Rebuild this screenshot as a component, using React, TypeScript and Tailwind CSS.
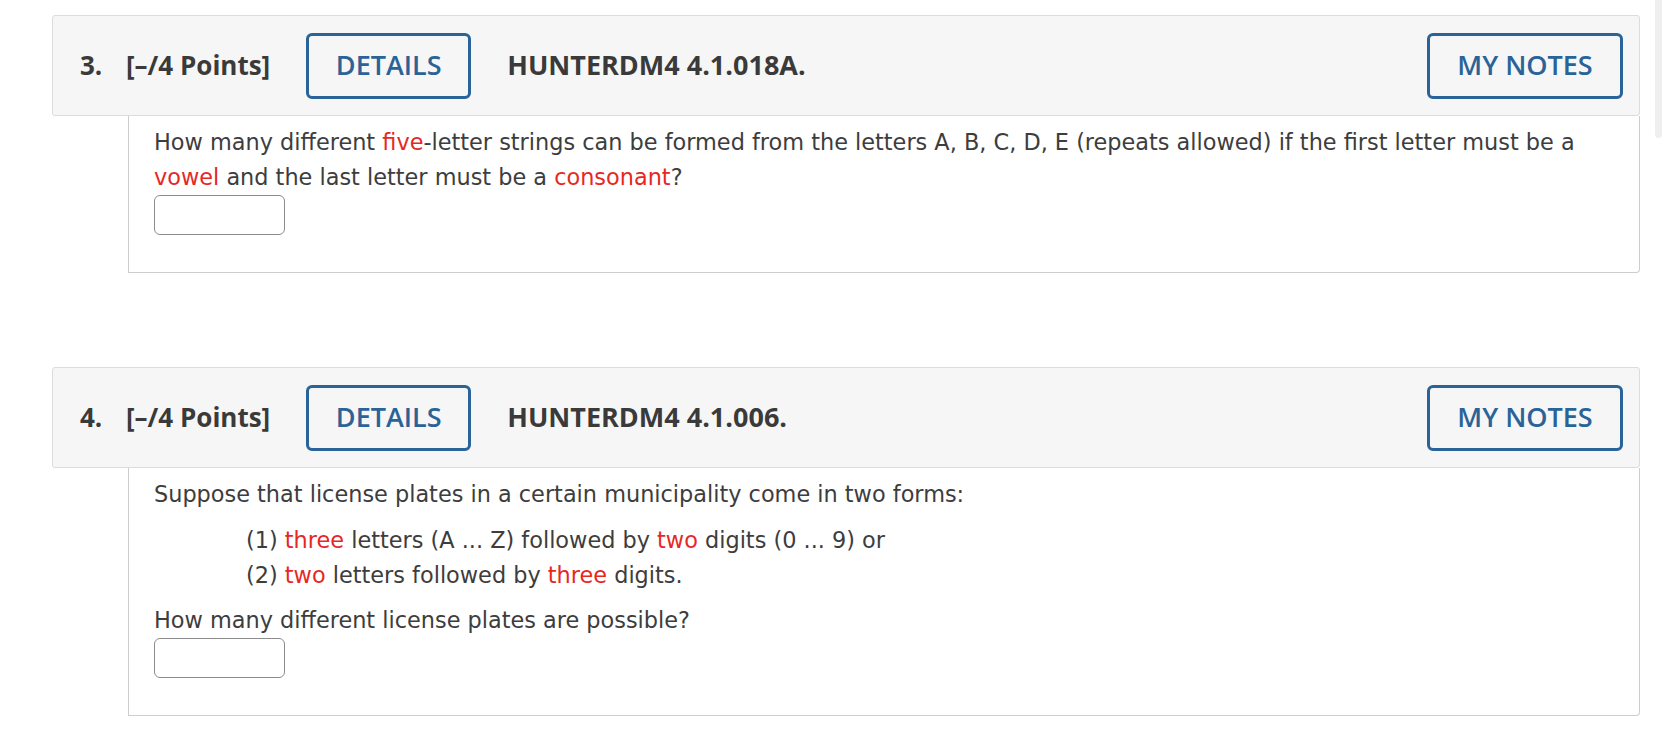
const RED = "text-[#e6281f]";

function Red({ children }: { children: React.ReactNode }) {
  return <span className={RED}>{children}</span>;
}

function AnswerBox() {
  return (
    <input
      type="text"
      className="block h-[40px] w-[131px] rounded-[6px] border-[1.5px] border-[#8c8c8c] bg-white"
    />
  );
}

function QuestionHeader({ num, code }: { num: string; code: string }) {
  return (
    <div className="flex h-[101px] items-center rounded-[3px] border border-[#dcdcdc] bg-[#f6f6f6] pl-[27px] pr-[16px] font-['Open_Sans',sans-serif] text-[26px] font-bold text-[#3a3a3a]">
      <span className="w-[46px]">{num}</span>
      <span>[–/4 Points]</span>
      <button className="ml-[36px] h-[66px] w-[165px] rounded-[6px] border-[3px] border-[#2a6398] text-[27px] font-semibold text-[#2a6398]">
        DETAILS
      </button>
      <span className="ml-[36px] text-[27px]">{code}</span>
      <button className="ml-auto h-[66px] w-[196px] rounded-[6px] border-[3px] border-[#2a6398] text-[27px] font-semibold text-[#2a6398]">
        MY NOTES
      </button>
    </div>
  );
}

function QuestionBody({ children }: { children: React.ReactNode }) {
  return (
    <div className="ml-[76px] rounded-br-[4px] border-x border-b border-[#cdcdcd] bg-white pb-[37px] pl-[25px] pr-[20px] pt-[9px] font-['DejaVu_Sans',Verdana,sans-serif] text-[22.4px] leading-[35px] text-[#3d3d3d]">
      {children}
    </div>
  );
}

export default function App() {
  return (
    <div className="relative min-h-screen bg-white pl-[52px] pr-[28px] pt-[15px]">
      <div className="absolute right-[6px] top-0 h-[138px] w-[7px] rounded-b-[4px] bg-[#efefef]" />

      <section>
        <QuestionHeader num="3." code="HUNTERDM4 4.1.018A." />
        <QuestionBody>
          <p>
            How many different <Red>five</Red>-letter strings can be formed from
            the letters A, B, C, D, E (repeats allowed) if the first letter must
            be a <Red>vowel</Red> and the last letter must be a{" "}
            <Red>consonant</Red>?
          </p>
          <AnswerBox />
        </QuestionBody>
      </section>

      <section className="mt-[94px]">
        <QuestionHeader num="4." code="HUNTERDM4 4.1.006." />
        <QuestionBody>
          <p>Suppose that license plates in a certain municipality come in two forms:</p>
          <div className="mt-[11px] pl-[92px]">
            <p>
              (1) <Red>three</Red> letters (A ... Z) followed by <Red>two</Red>{" "}
              digits (0 ... 9) or
            </p>
            <p>
              (2) <Red>two</Red> letters followed by <Red>three</Red> digits.
            </p>
          </div>
          <p className="mt-[10px]">How many different license plates are possible?</p>
          <AnswerBox />
        </QuestionBody>
      </section>
    </div>
  );
}
